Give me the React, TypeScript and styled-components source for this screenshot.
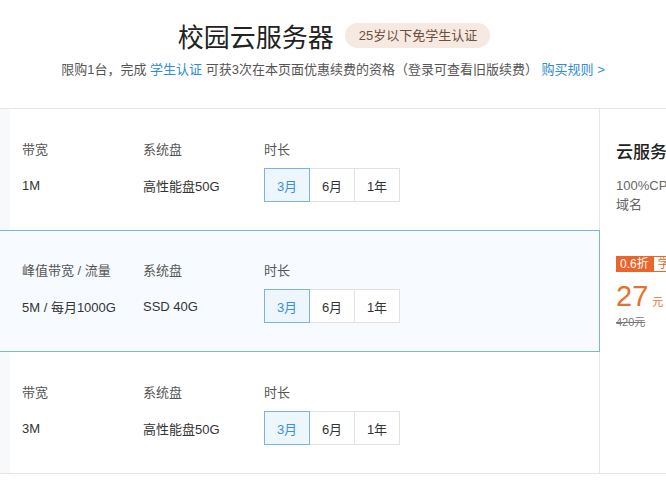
import styled, { createGlobalStyle } from "styled-components";

const GlobalStyle = createGlobalStyle`
  html, body {
    margin: 0;
    padding: 0;
    background: #fff;
    overflow: hidden;
  }
  body {
    font-family: "Liberation Sans", "Noto Sans CJK SC", sans-serif;
    color: #333;
  }
`;

const Page = styled.div`
  width: 666px;
  overflow: hidden;
`;

const Header = styled.div`
  padding-top: 18px;
  height: 90px;
  box-sizing: border-box;
  text-align: center;
`;

const TitleLine = styled.div`
  display: flex;
  justify-content: center;
  align-items: center;
  gap: 11px;
  height: 34px;
  padding-left: 2px;
`;

const Title = styled.h1`
  margin: 0;
  font-size: 26px;
  font-weight: 400;
  color: #222;
`;

const AgeBadge = styled.span`
  display: inline-block;
  height: 25px;
  line-height: 25px;
  padding: 0 13px 0 14px;
  border-radius: 13px;
  background: #f5e9e1;
  color: #6e4f3f;
  font-size: 13px;
`;

const Subtitle = styled.p`
  margin: 8px 0 0;
  font-size: 13px;
  line-height: 20px;
  color: #555;
  white-space: nowrap;
`;

const Link = styled.a`
  color: #2d8cdb;
  text-decoration: none;
`;

const Main = styled.div`
  display: flex;
  margin-top: 18px;
  border-top: 1px solid #e6e6e6;
  border-bottom: 1px solid #e6e6e6;
`;

const List = styled.div`
  width: 599px;
  flex-shrink: 0;
  background: #f8f9fb;
`;

const Row = styled.div<{ $active?: boolean }>`
  position: relative;
  height: ${(p) => (p.$active ? "122px" : "121px")};
  box-sizing: border-box;
  margin-left: ${(p) => (p.$active ? "-1px" : "10px")};
  margin-right: ${(p) => (p.$active ? "-1px" : "0")};
  padding: ${(p) => (p.$active ? "29px 0 0 22px" : "30px 0 0 12px")};
  background: ${(p) => (p.$active ? "#f7fbff" : "#fff")};
  border: ${(p) => (p.$active ? "1px solid #7db2e4" : "none")};
  z-index: ${(p) => (p.$active ? 2 : 1)};
`;

const Grid = styled.div`
  display: grid;
  grid-template-columns: 121px 121px auto;
  grid-template-rows: 18px 34px;
  row-gap: 11px;
  align-items: center;
`;

const Label = styled.div`
  font-size: 13px;
  color: #555;
  white-space: nowrap;
`;

const Value = styled.div`
  font-size: 13px;
  color: #333;
  white-space: nowrap;
`;

const Options = styled.div`
  display: flex;
`;

const Option = styled.button<{ $selected?: boolean }>`
  width: 46px;
  height: 34px;
  margin-left: -1px;
  padding: 0;
  border: 1px solid ${(p) => (p.$selected ? "#7db2e4" : "#e2e2e2")};
  background: ${(p) => (p.$selected ? "#eef6fd" : "#fff")};
  color: ${(p) => (p.$selected ? "#3a8ee6" : "#333")};
  font-family: inherit;
  font-size: 13px;
  position: relative;
  z-index: ${(p) => (p.$selected ? 1 : 0)};
  &:first-child {
    margin-left: 0;
  }
`;

const Side = styled.div`
  flex: 1;
  border-left: 1px solid #e6e6e6;
  padding: 32px 0 0 16px;
  white-space: nowrap;
  overflow: hidden;
`;

const SideTitle = styled.div`
  font-size: 17px;
  line-height: 24px;
  font-weight: 500;
  color: #222;
`;

const Specs = styled.div`
  margin-top: 11px;
  font-size: 13px;
  line-height: 19px;
  color: #666;
`;

const Tags = styled.div`
  display: flex;
  margin-top: 42px;
`;

const DiscountTag = styled.span`
  height: 16px;
  line-height: 16px;
  padding: 0 4px;
  background: #e9652c;
  color: #fff;
  font-size: 12px;
`;

const StudentTag = styled.span`
  height: 14px;
  line-height: 14px;
  padding: 0 4px;
  border: 1px solid #e9652c;
  color: #e9652c;
  font-size: 12px;
`;

const Price = styled.div`
  margin-top: 10px;
  color: #e3722f;
  line-height: 28px;
`;

const PriceNum = styled.span`
  font-size: 29px;
  font-weight: 300;
`;

const PriceUnit = styled.span`
  font-size: 11px;
  margin-left: 4px;
`;

const OldPrice = styled.div`
  margin-top: -1px;
  font-size: 11px;
  color: #777;
  text-decoration: line-through;
  line-height: 14px;
`;

type Plan = {
  labelA: string;
  valueA: string;
  valueB: string;
};

const plans: Plan[] = [
  { labelA: "带宽", valueA: "1M", valueB: "高性能盘50G" },
  { labelA: "峰值带宽 / 流量", valueA: "5M / 每月1000G", valueB: "SSD 40G" },
  { labelA: "带宽", valueA: "3M", valueB: "高性能盘50G" },
];

const durations = ["3月", "6月", "1年"];

export default function App() {
  return (
    <Page>
      <GlobalStyle />
      <Header>
        <TitleLine>
          <Title>校园云服务器</Title>
          <AgeBadge>25岁以下免学生认证</AgeBadge>
        </TitleLine>
        <Subtitle>
          限购1台，完成 <Link>学生认证</Link> 可获3次在本页面优惠续费的资格（登录可查看旧版续费） <Link>购买规则 &gt;</Link>
        </Subtitle>
      </Header>
      <Main>
        <List>
          {plans.map((plan, i) => (
            <Row key={i} $active={i === 1}>
              <Grid>
                <Label>{plan.labelA}</Label>
                <Label>系统盘</Label>
                <Label>时长</Label>
                <Value>{plan.valueA}</Value>
                <Value>{plan.valueB}</Value>
                <Options>
                  {durations.map((d, j) => (
                    <Option key={d} $selected={j === 0}>
                      {d}
                    </Option>
                  ))}
                </Options>
              </Grid>
            </Row>
          ))}
        </List>
        <Side>
          <SideTitle>云服务器</SideTitle>
          <Specs>
            <div>100%CPU</div>
            <div>域名</div>
          </Specs>
          <Tags>
            <DiscountTag>0.6折</DiscountTag>
            <StudentTag>学生专享</StudentTag>
          </Tags>
          <Price>
            <PriceNum>27</PriceNum>
            <PriceUnit>元</PriceUnit>
          </Price>
          <OldPrice>420元</OldPrice>
        </Side>
      </Main>
    </Page>
  );
}
